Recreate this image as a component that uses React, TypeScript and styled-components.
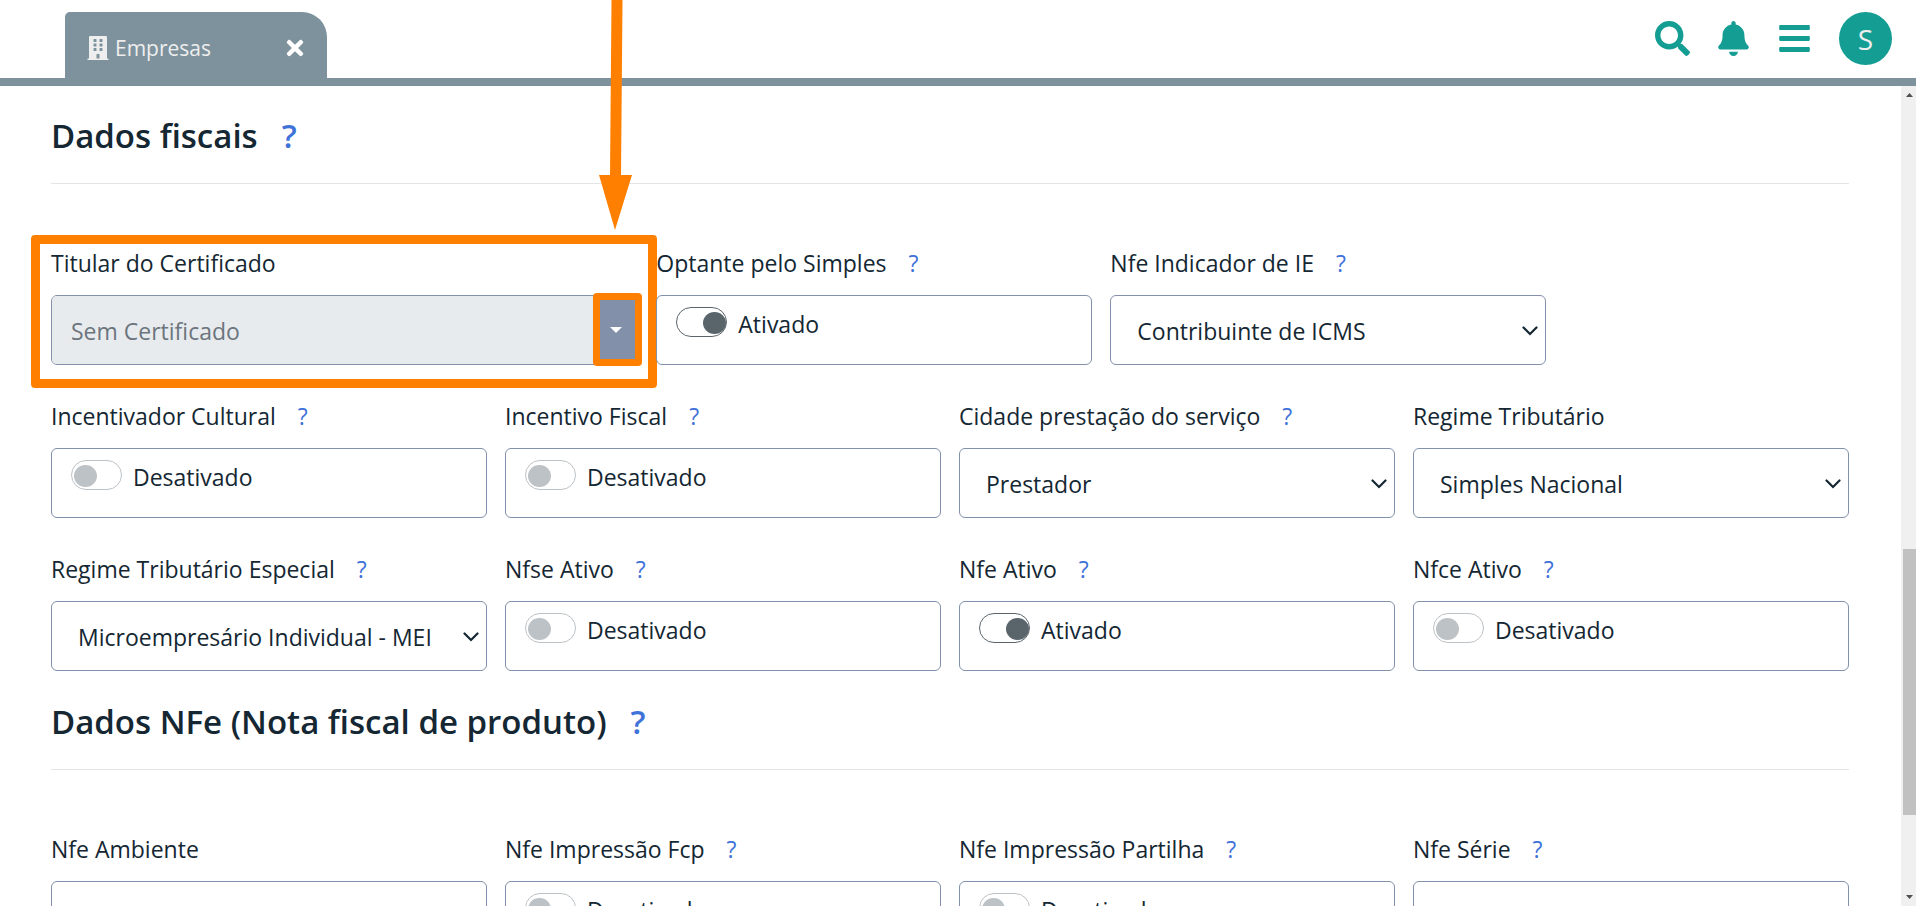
import React, { useId, useState } from "react";
import styled, { createGlobalStyle } from "styled-components";
import { FaBars, FaBell, FaBuilding, FaSearch, FaTimes } from "react-icons/fa";

const color = {
  text: "#142733",
  muted: "#6c757d",
  slate: "#7d929d",
  border: "#8290aa",
  teal: "#149d93",
  link: "#3f72d9",
  line: "#e2e4e5",
  mark: "#ff8000",
};

const GlobalStyle = createGlobalStyle`
  *, *::before, *::after { box-sizing: border-box; }
  body {
    margin: 0;
    background: #fff;
    color: ${color.text};
    font-family: "Open Sans", "Noto Sans", sans-serif;
    font-size: 23px;
    line-height: 38px;
  }
  button, input, select { font: inherit; color: inherit; }
`;

const Shell = styled.div`
  position: relative;
  display: flex;
  flex-direction: column;
  height: 100vh;
  padding-bottom: 2px;
  overflow: hidden;
`;

const TopBar = styled.header`
  display: flex;
  align-items: flex-start;
  justify-content: space-between;
  flex: none;
  padding: 12px 24px 0 65px;
  border-bottom: 8px solid ${color.slate};
`;

const Tab = styled.div`
  display: flex;
  align-items: center;
  gap: 5px;
  width: 262px;
  height: 66px;
  padding: 6px 20px 0 21px;
  border-radius: 5px 25px 0 0;
  background: ${color.slate};
  color: #eee;
  font-size: 21px;
`;

const TabName = styled.span`
  flex: 1;
`;

const PlainButton = styled.button`
  display: flex;
  padding: 0;
  border: 0;
  background: none;
  cursor: pointer;
`;

const CloseButton = styled(PlainButton)`
  color: #fff;
  font-size: 24px;
`;

const Actions = styled.nav`
  display: flex;
  align-items: center;
  gap: 26px;
`;

const ActionButton = styled(PlainButton)`
  margin-bottom: 13px;
  color: ${color.teal};
  font-size: 35px;
`;

const Avatar = styled(PlainButton)`
  align-items: center;
  justify-content: center;
  width: 53px;
  height: 53px;
  margin: 0 0 13px 1px;
  border-radius: 50%;
  background: ${color.teal};
  color: #eee;
  font-size: 28px;
`;

const Body = styled.div`
  display: flex;
  flex: 1;
  min-height: 0;
`;

const Content = styled.main`
  flex: 1;
  min-width: 0;
  overflow: hidden;
  padding: 26px 52px 0 51px;
`;

const Section = styled.section`
  margin-bottom: 27px;
`;

const Help = styled.a`
  margin-left: 22px;
  color: ${color.link};
  text-decoration: none;
`;

const SectionTitle = styled.h2`
  margin: 0 0 60px;
  padding-bottom: 23px;
  border-bottom: 1px solid ${color.line};
  font-size: 33px;
  font-weight: 600;
  line-height: 48px;

  ${Help} {
    margin-left: 24px;
  }
`;

const Grid = styled.div`
  display: grid;
  grid-template-columns: repeat(12, 1fr);
  gap: 32px 18px;
`;

const FieldBox = styled.div<{ $span: number }>`
  position: relative;
  grid-column: span ${(p) => p.$span};
  min-width: 0;
`;

const LabelRow = styled.div`
  margin-bottom: 13px;
  white-space: nowrap;
`;

const Frame = styled.div`
  display: flex;
  height: 70px;
  border: 1px solid ${color.border};
  border-radius: 6px;
`;

const TextInput = styled.input`
  flex: 1;
  min-width: 0;
  padding: 2px 19px 0;
  border: 0;
  border-radius: 5px;
  outline: 0;
  background: transparent;

  &:disabled {
    border-radius: 5px 0 0 5px;
    background: #e8ebee;
    color: ${color.muted};
  }
`;

const Caret = styled.button`
  position: relative;
  display: flex;
  align-items: center;
  justify-content: center;
  width: 42px;
  padding: 0;
  border: 0;
  background: ${color.border};
`;

const Select = styled.select`
  flex: 1;
  min-width: 0;
  padding: 2px 40px 0 26px;
  border: 0;
  outline: 0;
  background: transparent;
  appearance: none;
`;

const Chevron = styled.svg`
  flex: none;
  align-self: center;
  width: 16px;
  height: 10px;
  margin: 1px 7px 0 -23px;
  pointer-events: none;
`;

const SwitchRow = styled.label`
  display: flex;
  align-items: flex-start;
  gap: 11px;
  padding: 11px 19px;
  line-height: 34px;
`;

const Switch = styled.input`
  flex: none;
  width: 51px;
  height: 30px;
  margin: 0;
  padding: 4px 0 3px 2px;
  border: 1px solid #bdc2c6;
  border-radius: 15px;
  appearance: none;

  &::before {
    content: "";
    display: block;
    width: 23px;
    height: 22px;
    border-radius: 50%;
    background: #bdc2c6;
  }

  &:checked {
    border-color: #5a656b;
  }

  &:checked::before {
    margin-left: auto;
    background: #5a656b;
  }
`;

const ScrollTrack = styled.div`
  display: flex;
  flex-direction: column;
  align-items: flex-end;
  width: 15px;
  padding: 7px 0;
  background: #f0f0f0;
`;

const ScrollArrow = styled.svg`
  width: 7px;
  height: 4px;
  margin: 0 3px;
`;

const ScrollGap = styled.div<{ $grow: number }>`
  flex: ${(p) => p.$grow} 0 0;
`;

const ScrollThumb = styled.div`
  flex: 266 0 0;
  width: 13px;
  background: #c1c1c1;
`;

const FieldHighlight = styled.div`
  position: absolute;
  inset: -9px -19px -23px -20px;
  border: 9px solid ${color.mark};
  border-radius: 4px;
  pointer-events: none;
`;

const CaretHighlight = styled.span`
  position: absolute;
  inset: -3px -5px -2px -2px;
  border: 7px solid ${color.mark};
  border-radius: 4px;
`;

const Pointer = styled.svg`
  position: absolute;
  top: 0;
  left: calc(100% / 3 - 40px);
  width: 33px;
  height: 230px;
  pointer-events: none;
`;

type FieldSpec = {
  label: string;
  help?: boolean;
  span?: number;
  kind: "switch" | "select" | "text" | "certificate";
  value?: string;
  on?: boolean;
};

const fiscal: FieldSpec[] = [
  { label: "Titular do Certificado", span: 4, kind: "certificate", value: "Sem Certificado" },
  { label: "Optante pelo Simples", help: true, kind: "switch", on: true },
  { label: "Nfe Indicador de IE", help: true, kind: "select", value: "Contribuinte de ICMS" },
  { label: "Incentivador Cultural", help: true, kind: "switch" },
  { label: "Incentivo Fiscal", help: true, kind: "switch" },
  { label: "Cidade prestação do serviço", help: true, kind: "select", value: "Prestador" },
  { label: "Regime Tributário", kind: "select", value: "Simples Nacional" },
  { label: "Regime Tributário Especial", help: true, kind: "select", value: "Microempresário Individual - MEI" },
  { label: "Nfse Ativo", help: true, kind: "switch" },
  { label: "Nfe Ativo", help: true, kind: "switch", on: true },
  { label: "Nfce Ativo", help: true, kind: "switch" },
];

const nfe: FieldSpec[] = [
  { label: "Nfe Ambiente", kind: "text" },
  { label: "Nfe Impressão Fcp", help: true, kind: "switch" },
  { label: "Nfe Impressão Partilha", help: true, kind: "switch" },
  { label: "Nfe Série", help: true, kind: "text" },
];

function Control({ id, spec }: { id: string; spec: FieldSpec }) {
  const [on, setOn] = useState(Boolean(spec.on));
  if (spec.kind === "switch") {
    return (
      <Frame>
        <SwitchRow>
          <Switch id={id} type="checkbox" checked={on} onChange={(e) => setOn(e.target.checked)} />
          {on ? "Ativado" : "Desativado"}
        </SwitchRow>
      </Frame>
    );
  }
  if (spec.kind === "select") {
    return (
      <Frame>
        <Select id={id} defaultValue={spec.value}>
          <option>{spec.value}</option>
        </Select>
        <Chevron viewBox="0 0 16 10" aria-hidden="true">
          <path d="M1.5 1.5 8 8l6.500-6.500" fill="none" stroke={color.text} strokeWidth="2.200" strokeLinecap="round" />
        </Chevron>
      </Frame>
    );
  }
  if (spec.kind === "certificate") {
    return (
      <Frame>
        <TextInput id={id} disabled defaultValue={spec.value} />
        <Caret type="button" aria-label="Escolher certificado">
          <svg width="12" height="6" viewBox="0 0 12 6" aria-hidden="true">
            <path d="M0 0h12L6 6z" fill="#fff" />
          </svg>
          <CaretHighlight />
        </Caret>
      </Frame>
    );
  }
  return (
    <Frame>
      <TextInput id={id} type="text" />
    </Frame>
  );
}

function Field({ spec }: { spec: FieldSpec }) {
  const id = useId();
  return (
    <FieldBox $span={spec.span ?? 3}>
      <LabelRow>
        <label htmlFor={id}>{spec.label}</label>
        {spec.help && <Help href="#ajuda">?</Help>}
      </LabelRow>
      <Control id={id} spec={spec} />
      {spec.kind === "certificate" && <FieldHighlight />}
    </FieldBox>
  );
}

function FieldSection({ title, fields }: { title: string; fields: FieldSpec[] }) {
  return (
    <Section>
      <SectionTitle>
        {title}
        <Help href="#ajuda">?</Help>
      </SectionTitle>
      <Grid>
        {fields.map((f) => (
          <Field key={f.label} spec={f} />
        ))}
      </Grid>
    </Section>
  );
}

export default function App() {
  return (
    <Shell>
      <GlobalStyle />
      <TopBar>
        <Tab>
          <FaBuilding size={24} />
          <TabName>Empresas</TabName>
          <CloseButton type="button" aria-label="Fechar">
            <FaTimes />
          </CloseButton>
        </Tab>
        <Actions>
          <ActionButton type="button" aria-label="Buscar">
            <FaSearch />
          </ActionButton>
          <ActionButton type="button" aria-label="Notificações">
            <FaBell />
          </ActionButton>
          <ActionButton type="button" aria-label="Menu">
            <FaBars />
          </ActionButton>
          <Avatar type="button">S</Avatar>
        </Actions>
      </TopBar>
      <Body>
        <Content>
          <FieldSection title="Dados fiscais" fields={fiscal} />
          <FieldSection title="Dados NFe (Nota fiscal de produto)" fields={nfe} />
        </Content>
        <ScrollTrack aria-hidden="true">
          <ScrollArrow viewBox="0 0 7 4">
            <path d="M0 4 3.500 0 7 4z" fill="#505050" />
          </ScrollArrow>
          <ScrollGap $grow={452} />
          <ScrollThumb />
          <ScrollGap $grow={80} />
          <ScrollArrow viewBox="0 0 7 4">
            <path d="M0 0h7L3.500 4z" fill="#505050" />
          </ScrollArrow>
        </ScrollTrack>
      </Body>
      <Pointer viewBox="0 0 33 230" aria-hidden="true">
        <path d="M12.500 0h11l-1.500 175h11L16 230 0 175h11z" fill={color.mark} />
      </Pointer>
    </Shell>
  );
}
